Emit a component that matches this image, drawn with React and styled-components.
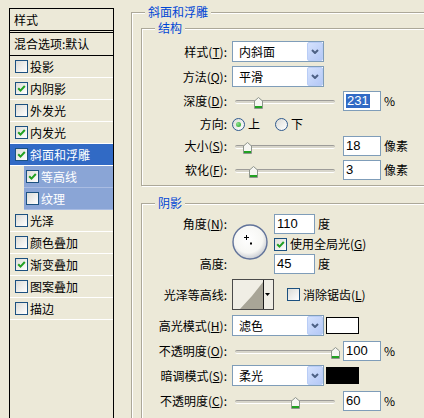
import React from 'react';
import styled, { createGlobalStyle } from 'styled-components';

const GlobalStyle = createGlobalStyle`
  html, body {
    margin: 0;
    padding: 0;
    background: #ece9d8;
    overflow: hidden;
  }
  body {
    font-family: "Noto Sans CJK SC", "Noto Sans", sans-serif;
    font-size: 12px;
    color: #000;
  }
`;

const Dialog = styled.div`
  display: flex;
  align-items: flex-start;
  width: 424px;
  height: 418px;
  padding: 8px 0 0 9px;
  box-sizing: border-box;
  overflow: hidden;
`;

/* ---------- left list of effects ---------- */

const StyleList = styled.div`
  flex-shrink: 0;
  width: 105px;
  height: 420px;
  box-sizing: border-box;
  border: 1px solid #000;
  border-bottom: none;
  display: flex;
  flex-direction: column;
`;

const ListHeader = styled.div`
  height: 21px;
  line-height: 21px;
  padding-left: 4px;
  border-bottom: 1px solid #000;
`;

const BlendRow = styled.div`
  height: 22px;
  line-height: 22px;
  margin-top: 1px;
  padding-left: 4px;
  border-top: 1px solid #000;
  border-bottom: 1px solid #000;
`;

const Item = styled.div`
  height: 21px;
  display: flex;
  align-items: center;
  gap: 2px;
  border-bottom: 1px solid ${p => (p.$indent ? '#a9bce2' : '#fff')};
  margin-left: ${p => (p.$indent ? '14px' : '0')};
  padding-left: ${p => (p.$indent ? '2px' : '5px')};
  background: ${p => (p.$selected ? '#316ac5' : p.$indent ? '#8aa5d6' : 'transparent')};
  color: ${p => (p.$selected || p.$indent ? '#fff' : '#000')};
  white-space: nowrap;
`;

const CheckBox = styled.span`
  flex-shrink: 0;
  width: 13px;
  height: 13px;
  box-sizing: border-box;
  border: 1px solid #1c5180;
  background: linear-gradient(135deg, #dcdcd7, #fff);
  display: inline-flex;
  align-items: center;
  justify-content: center;
`;

const Check = ({ checked }) => (
  <CheckBox>
    {checked && (
      <svg width="9" height="9" viewBox="0 0 9 9">
        <path d="M1.2 4.2 L3.5 6.6 L7.8 2" fill="none" stroke="#21a121" strokeWidth="2" />
      </svg>
    )}
  </CheckBox>
);

const effects = [
  { name: '投影' },
  { name: '内阴影', checked: true },
  { name: '外发光' },
  { name: '内发光', checked: true },
  { name: '斜面和浮雕', checked: true, selected: true },
  { name: '等高线', checked: true, indent: true },
  { name: '纹理', indent: true },
  { name: '光泽' },
  { name: '颜色叠加' },
  { name: '渐变叠加', checked: true },
  { name: '图案叠加' },
  { name: '描边' },
];

/* ---------- group boxes ---------- */

const OuterGroup = styled.div`
  position: relative;
  flex-shrink: 0;
  width: 310px;
  height: 440px;
  margin: 4px 0 0 17px;
  padding: 15px 0 0 9px;
  box-sizing: border-box;
  border: 1px solid #aca899;
  box-shadow: inset 1px 1px 0 #fff;
`;

const InnerGroup = styled.div`
  position: relative;
  width: 300px;
  box-sizing: border-box;
  margin-top: ${p => p.$mt || 0}px;
  padding: ${p => p.$pt}px 0 ${p => p.$pb}px 0;
  border: 1px solid #aca899;
  box-shadow: inset 1px 1px 0 #fff, 1px 1px 0 #fff;
`;

const GroupTitle = styled.span`
  position: absolute;
  top: -8px;
  left: 13px;
  padding: 0 3px;
  line-height: 14px;
  background: #ece9d8;
  color: #0046d5;
`;

/* ---------- form rows ---------- */

const Row = styled.div`
  display: flex;
  align-items: center;
  height: ${p => p.$h || 20}px;
  margin-top: ${p => p.$mt || 0}px;
`;

const Label = styled.span`
  flex-shrink: 0;
  width: 85px;
  margin-right: 5px;
  text-align: right;
  white-space: nowrap;
  line-height: 14px;
  u { text-decoration: underline; }
`;

const SelectBox = styled.div`
  flex-shrink: 0;
  width: 92px;
  height: 21px;
  box-sizing: border-box;
  border: 1px solid #7f9db9;
  background: #fff;
  display: flex;
  align-items: center;
  justify-content: space-between;
  padding-left: 6px;
`;

const DropButton = styled.span`
  width: 16px;
  height: 19px;
  box-sizing: border-box;
  border: 1px solid #b9cdf6;
  border-radius: 2px;
  background: linear-gradient(135deg, #d5e2fd, #b4c8f6);
  display: flex;
  align-items: center;
  justify-content: center;
`;

const Select = ({ value }) => (
  <SelectBox>
    <span>{value}</span>
    <DropButton>
      <svg width="8" height="5" viewBox="0 0 8 5">
        <polyline points="1,1 4,4 7,1" fill="none" stroke="#4d6185" strokeWidth="2" />
      </svg>
    </DropButton>
  </SelectBox>
);

const NumInput = styled.div`
  flex-shrink: 0;
  width: ${p => p.$w || 38}px;
  height: 20px;
  box-sizing: border-box;
  border: 1px solid #7f9db9;
  background: #fff;
  padding-left: 2px;
  font-family: "Liberation Sans", Arial, sans-serif;
  font-size: 13px;
  line-height: 18px;
`;

const Highlight = styled.span`
  display: inline-block;
  padding: 0 1px;
  line-height: 14px;
  background: #316ac5;
  color: #fff;
`;

const Unit = styled.span`
  margin-left: ${p => p.$ml || 3}px;
  line-height: 14px;
`;

const SliderBox = styled.div`
  position: relative;
  flex-shrink: 0;
  width: 111px;
  height: 20px;
`;

const Track = styled.div`
  position: absolute;
  left: 3px;
  top: 9px;
  width: 100px;
  height: 4px;
  box-sizing: border-box;
  border-radius: 2px;
  border-top: 1px solid #9d9c99;
  border-bottom: 1px solid #fff;
  background: #d8d6cb;
`;

const ThumbSvg = styled.svg`
  position: absolute;
  top: 6px;
`;

const Slider = ({ frac }) => (
  <SliderBox>
    <Track />
    <ThumbSvg width="9" height="12" viewBox="0 0 9 12" style={{ left: 3 + frac * 100 - 4.5 }}>
      <polygon points="0.5,4 4.5,0.5 8.5,4 8.5,11.5 0.5,11.5" fill="#f6f6f2" stroke="#8e958c" />
      <rect x="1" y="9" width="7" height="2" fill="#21a121" />
    </ThumbSvg>
  </SliderBox>
);

const RadioDot = styled.span`
  flex-shrink: 0;
  width: 13px;
  height: 13px;
  box-sizing: border-box;
  border-radius: 50%;
  border: 1px solid #2f5a8e;
  background: linear-gradient(135deg, #dcdcd7, #fff);
  display: inline-flex;
  align-items: center;
  justify-content: center;
  &::after {
    content: '';
    width: 5px;
    height: 5px;
    border-radius: 50%;
    background: ${p => (p.$checked ? 'radial-gradient(circle at 35% 35%, #8ee08e, #21a121)' : 'transparent')};
  }
`;

const RadioText = styled.span`
  margin: 0 ${p => p.$mr || 0}px 0 3px;
  line-height: 14px;
`;

const Swatch = styled.span`
  flex-shrink: 0;
  width: 33px;
  height: 17px;
  box-sizing: border-box;
  margin-left: 2px;
  border: 1px solid #000;
  background: ${p => p.$color};
`;

const AngleGrid = styled.div`
  display: grid;
  grid-template-columns: 90px 42px auto;
  grid-template-rows: 20px 20px 20px;
  margin-top: 10px;
`;

const GridLabel = styled(Label)`
  align-self: center;
  grid-column: 1;
  grid-row: ${p => p.$row};
`;

const GridCell = styled.div`
  grid-column: 3;
  grid-row: ${p => p.$row};
  display: flex;
  align-items: center;
`;

const DialSvg = styled.svg`
  grid-column: 2;
  grid-row: 1 / span 3;
  margin-top: 10px;
`;

const CheckText = styled.span`
  margin-left: 3px;
  line-height: 14px;
  white-space: nowrap;
`;

const ContourBox = styled.div`
  flex-shrink: 0;
  width: 42px;
  height: 31px;
  box-sizing: border-box;
  border: 1px solid #4a4a4a;
  margin-right: 13px;
  display: flex;
`;

const Dial = () => (
  <DialSvg width="36" height="36" viewBox="0 0 36 36">
    <defs>
      <radialGradient id="dialFill" cx="45%" cy="40%" r="60%">
        <stop offset="0%" stopColor="#ffffff" />
        <stop offset="70%" stopColor="#f7f7f4" />
        <stop offset="100%" stopColor="#c9ccd2" />
      </radialGradient>
    </defs>
    <circle cx="18" cy="18" r="17" fill="url(#dialFill)" stroke="#61739a" strokeWidth="1.4" />
    <line x1="12" y1="13.5" x2="17" y2="13.5" stroke="#000" />
    <line x1="14.5" y1="11" x2="14.5" y2="16" stroke="#000" />
    <rect x="18" y="18.5" width="2" height="2" fill="#000" />
  </DialSvg>
);

const Contour = () => (
  <ContourBox>
    <svg width="40" height="29" viewBox="0 0 40 29">
      <rect width="40" height="29" fill="#f0eee5" />
      <path d="M7 29 Q19 17 30 2 L30 29 Z" fill="#a8a597" />
      <line x1="30.5" y1="0" x2="30.5" y2="29" stroke="#1a1a1a" />
      <path d="M32 13 L37 13 L34.5 16 Z" fill="#000" />
    </svg>
  </ContourBox>
);

const App = () => {
  return (
    <>
      <GlobalStyle />
      <Dialog>
        <StyleList>
          <ListHeader>样式</ListHeader>
          <BlendRow>混合选项:默认</BlendRow>
          {effects.map(e => (
            <Item key={e.name} $indent={e.indent} $selected={e.selected}>
              <Check checked={e.checked} />
              <span>{e.name}</span>
            </Item>
          ))}
        </StyleList>

        <OuterGroup>
          <GroupTitle>斜面和浮雕</GroupTitle>

          <InnerGroup $pt={12} $pb={5}>
            <GroupTitle>结构</GroupTitle>
            <Row $h={21}>
              <Label>样式(<u>T</u>):</Label>
              <Select value="内斜面" />
            </Row>
            <Row $h={21} $mt={4}>
              <Label>方法(<u>Q</u>):</Label>
              <Select value="平滑" />
            </Row>
            <Row $mt={4}>
              <Label>深度(<u>D</u>):</Label>
              <Slider frac={0.231} />
              <NumInput><Highlight>231</Highlight></NumInput>
              <Unit>%</Unit>
            </Row>
            <Row $h={22} $mt={2}>
              <Label>方向:</Label>
              <RadioDot $checked />
              <RadioText $mr={15}>上</RadioText>
              <RadioDot />
              <RadioText>下</RadioText>
            </Row>
            <Row $mt={1}>
              <Label>大小(<u>S</u>):</Label>
              <Slider frac={0.12} />
              <NumInput>18</NumInput>
              <Unit>像素</Unit>
            </Row>
            <Row $mt={4}>
              <Label>软化(<u>F</u>):</Label>
              <Slider frac={3 / 16} />
              <NumInput>3</NumInput>
              <Unit>像素</Unit>
            </Row>
          </InnerGroup>

          <InnerGroup $mt={17} $pt={0} $pb={7}>
            <GroupTitle>阴影</GroupTitle>
            <AngleGrid>
              <GridLabel $row={1}>角度(<u>N</u>):</GridLabel>
              <Dial />
              <GridCell $row={1}>
                <NumInput $w={41}>110</NumInput>
                <Unit>度</Unit>
              </GridCell>
              <GridCell $row={2}>
                <Check checked />
                <CheckText>使用全局光(<u>G</u>)</CheckText>
              </GridCell>
              <GridLabel $row={3}>高度:</GridLabel>
              <GridCell $row={3}>
                <NumInput $w={41}>45</NumInput>
                <Unit>度</Unit>
              </GridCell>
            </AngleGrid>
            <Row $h={31} $mt={5}>
              <Label>光泽等高线:</Label>
              <Contour />
              <Check />
              <CheckText>消除锯齿(<u>L</u>)</CheckText>
            </Row>
            <Row $h={21} $mt={5}>
              <Label>高光模式(<u>H</u>):</Label>
              <Select value="滤色" />
              <Swatch $color="#fff" />
            </Row>
            <Row $mt={5}>
              <Label>不透明度(<u>O</u>):</Label>
              <Slider frac={1} />
              <NumInput>100</NumInput>
              <Unit>%</Unit>
            </Row>
            <Row $h={21} $mt={4}>
              <Label>暗调模式(<u>S</u>):</Label>
              <Select value="柔光" />
              <Swatch $color="#000" />
            </Row>
            <Row $mt={5}>
              <Label>不透明度(<u>C</u>):</Label>
              <Slider frac={0.6} />
              <NumInput>60</NumInput>
              <Unit>%</Unit>
            </Row>
          </InnerGroup>
        </OuterGroup>
      </Dialog>
    </>
  );
};

export default App;
